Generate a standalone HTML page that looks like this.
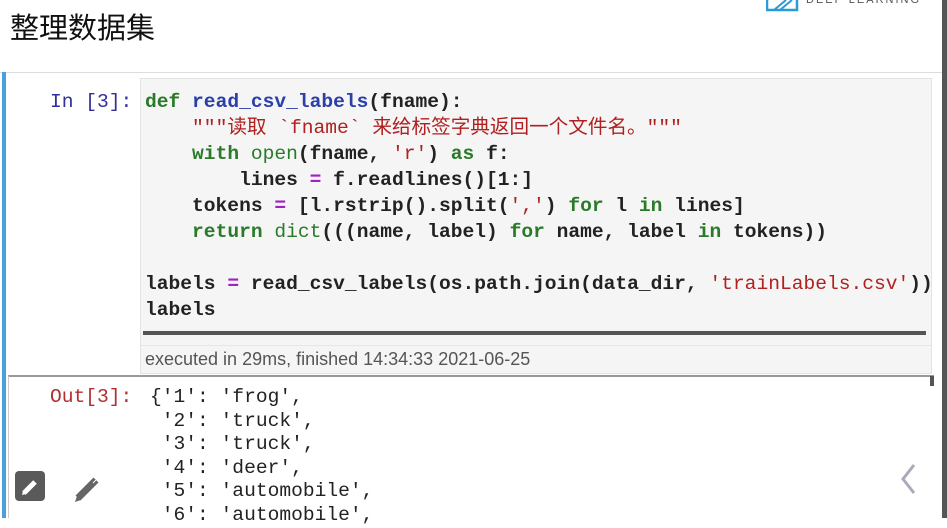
<!DOCTYPE html>
<html><head><meta charset="utf-8"><style>
body{margin:0;width:947px;height:518px;overflow:hidden;background:#fff;position:relative;font-family:"Liberation Sans","Noto Sans CJK SC",sans-serif}
.abs{position:absolute}
.code{font-family:"Liberation Mono","Noto Sans CJK SC",monospace;font-size:19.6px;line-height:26px;white-space:pre;color:#222;font-weight:bold}
.k{color:#2a7a2a}.f{color:#2a3fa8}.s{color:#b02020}.o{color:#a020c0}.b{color:#2a7a2a;font-weight:normal}
.out{font-family:"Liberation Mono",monospace;font-size:19.6px;line-height:23.6px;white-space:pre;color:#222}
</style></head><body>
<div class="abs" style="left:10px;top:5px;font-size:29px;color:#111;font-family:'Liberation Sans','Noto Sans CJK SC',sans-serif">整理数据集</div>
<svg class="abs" style="left:766px;top:0" width="34" height="12"><path d="M1 0V10H31V0" fill="none" stroke="#2a9ad8" stroke-width="2.5"/><path d="M8 10L20 0M14 10L26 0" stroke="#2a9ad8" stroke-width="2"/></svg>
<div class="abs" style="left:806px;top:-6px;font-size:11px;letter-spacing:2px;color:#555">DEEP LEARNING</div>
<div class="abs" style="left:0;top:72px;width:942px;height:1px;background:#ddd"></div>
<div class="abs" style="left:2px;top:72px;width:4px;height:446px;background:#4a9fdc"></div>
<div class="abs" style="left:942px;top:0;width:5px;height:518px;background:#555"></div>
<div class="abs" style="left:140px;top:78px;width:792px;height:296px;background:#f5f5f5;border:1px solid #e4e4e4;box-sizing:border-box"></div>
<div class="abs code" style="left:50px;top:89px;color:#30309a;font-weight:normal">In [3]:</div>
<div class="abs code" style="left:145px;top:89px;width:792px;overflow:hidden"><span class="k">def</span> <span class="f">read_csv_labels</span>(fname):
    <span class="s" style="font-weight:normal">"""读取 `fname` 来给标签字典返回一个文件名。"""</span>
    <span class="k">with</span> <span class="b">open</span>(fname, <span class="s" style="font-weight:normal">'r'</span>) <span class="k">as</span> f:
        lines <span class="o">=</span> f.readlines()[1:]
    tokens <span class="o">=</span> [l.rstrip().split(<span class="s" style="font-weight:normal">','</span>) <span class="k">for</span> l <span class="k">in</span> lines]
    <span class="k">return</span> <span class="b">dict</span>(((name, label) <span class="k">for</span> name, label <span class="k">in</span> tokens))

labels <span class="o">=</span> read_csv_labels(os.path.join(data_dir, <span class="s" style="font-weight:normal">'trainLabels.csv'</span>))
labels</div>
<div class="abs" style="left:143px;top:331px;width:783px;height:4px;background:#555"></div>
<div class="abs" style="left:141px;top:345px;width:790px;height:1px;background:#e6e6e6"></div>
<div class="abs" style="left:145px;top:349px;font-size:18px;color:#555">executed in 29ms, finished 14:34:33 2021-06-25</div>
<div class="abs" style="left:8px;top:375px;width:926px;height:143px;border-top:2px solid #999;border-left:1px solid #ccc;box-sizing:border-box"></div>
<div class="abs" style="left:930px;top:376px;width:4px;height:10px;background:#555"></div>
<div class="abs out" style="left:50px;top:386px;color:#b03030">Out[3]:</div>
<div class="abs out" style="left:150px;top:386px">{'1': 'frog',
 '2': 'truck',
 '3': 'truck',
 '4': 'deer',
 '5': 'automobile',
 '6': 'automobile',</div>
<div class="abs" style="left:15px;top:471px;width:30px;height:30px;background:#5a5a5a;border-radius:4px"></div>
<svg class="abs" style="left:15px;top:471px" width="30" height="30"><path d="M9 22L20 11" stroke="#fff" stroke-width="5"/><path d="M7 24l1-4 3 3z" fill="#fff"/></svg>
<svg class="abs" style="left:72px;top:472px" width="34" height="32"><path d="M6 26L24 8" stroke="#666" stroke-width="7"/><path d="M21 11l3-3" stroke="#fff" stroke-width="1"/><path d="M3 30l2-6 4 4z" fill="#666"/></svg>
<svg class="abs" style="left:898px;top:463px" width="20" height="32"><path d="M16 2L5 16L16 30" fill="none" stroke="#aab" stroke-width="3"/></svg>
</body></html>
